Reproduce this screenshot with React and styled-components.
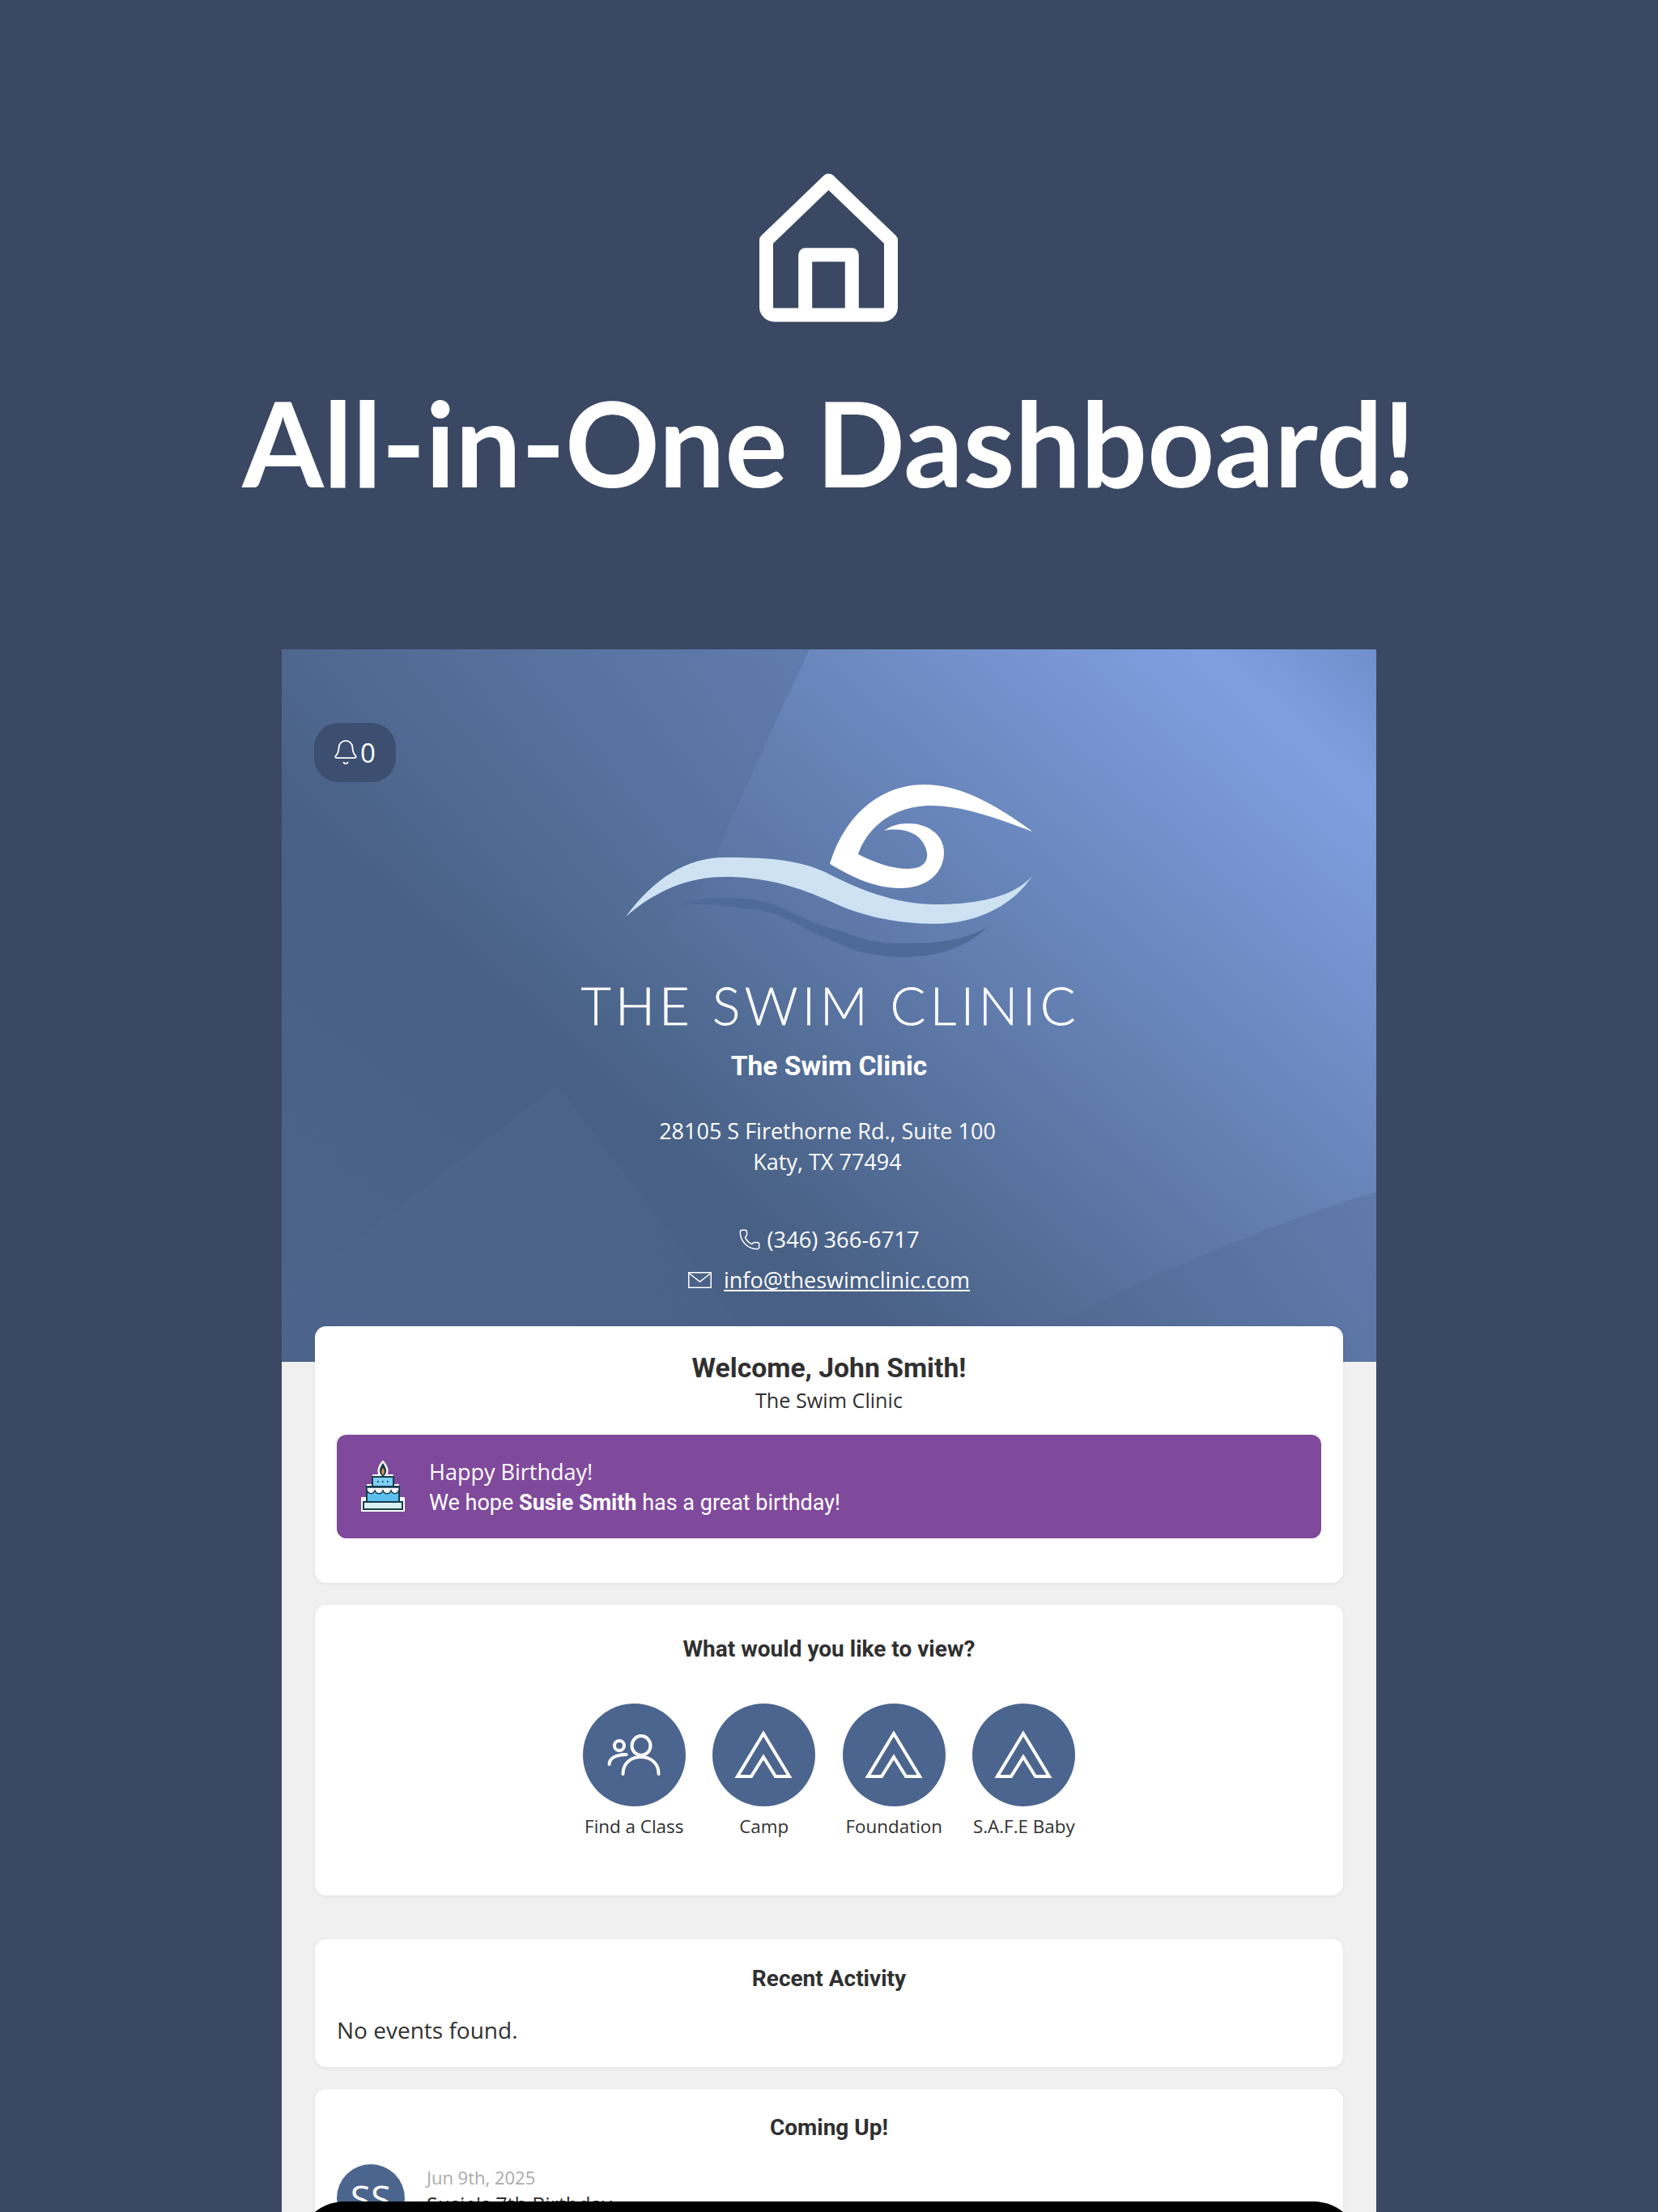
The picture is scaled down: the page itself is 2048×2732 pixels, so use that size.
import React from 'react'
import styled, { createGlobalStyle } from 'styled-components'
import { Bell, Phone } from 'lucide-react'

const GlobalStyle = createGlobalStyle`
  html, body {
    margin: 0;
    padding: 0;
    background: #3a4863;
  }
  * {
    box-sizing: border-box;
  }
`

const openSans = `"Open Sans", "Noto Sans", sans-serif`
const roboto = `Roboto, "Liberation Sans", sans-serif`

function HouseIcon() {
  return (
    <HouseSvg viewBox="0 0 171 185" fill="none" stroke="#fff" strokeWidth="17" strokeLinejoin="round">
      <path d="M85.5 10 L8.5 84 V166 a10 10 0 0 0 10 10 H152.5 a10 10 0 0 0 10-10 V84 Z" />
      <path d="M56.7 176 V101.7 H114.3 V176" />
    </HouseSvg>
  )
}

function HeroArt() {
  return (
    <ArtSvg viewBox="0 0 1352 880" preserveAspectRatio="none">
      <defs>
        <linearGradient id="topFacet" x1="0.85" y1="0" x2="0.62" y2="0.55">
          <stop offset="0" stopColor="#2f4060" stopOpacity="0.17" />
          <stop offset="1" stopColor="#2f4060" stopOpacity="0" />
        </linearGradient>
        <linearGradient id="lowFacet" x1="1" y1="0" x2="0.2" y2="1">
          <stop offset="0" stopColor="#2f4060" stopOpacity="0.16" />
          <stop offset="1" stopColor="#2f4060" stopOpacity="0.02" />
        </linearGradient>
        <linearGradient id="midFacet" x1="0.5" y1="0" x2="0.5" y2="1">
          <stop offset="0" stopColor="#8fb0d8" stopOpacity="0.03" />
          <stop offset="1" stopColor="#8fb0d8" stopOpacity="0.01" />
        </linearGradient>
      </defs>
      <path d="M0 0 H652 Q590 130 516 300 L300 520 L0 640 Z" fill="url(#topFacet)" />
      <path d="M341 538 L-8 808 V880 H600 Z" fill="url(#midFacet)" />
      <path d="M1352 670 Q1150 730 860 880 H1352 Z" fill="url(#lowFacet)" />
    </ArtSvg>
  )
}

function SwimLogo() {
  return (
    <LogoSvg viewBox="0 0 530 230">
      <path
        fill="#4e6a96"
        d="M83 157 C100 150 118 148 135 149 C165 150 185 150 215 166 C245 182 265 185 287 193 C310 202 335 206 352 205 C385 205 425 205 460 185 C440 205 405 222 356 222 C330 222 305 218 287 210 C262 200 245 192 222 180 C200 168 180 163 157 162 C135 158 110 156 83 157 Z"
      />
      <path
        fill="#cfe2f3"
        d="M13 172 C48 125 88 99 135 99 C180 99 225 100 263 119 C298 137 345 157 395 157 C440 157 490 150 515 122 C490 160 445 181 395 181 C345 181 300 170 265 153 C225 135 185 123 135 123 C90 123 50 140 13 172 Z"
      />
      <path
        fill="#fff"
        d="M515 67 C470 33 425 9 382 9 C325 9 282 50 265 107 C290 122 320 137 352 137 C385 137 406 118 406 93 C406 70 385 57 362 57 C350 57 340 60 332 66 C350 62 372 66 381 82 C390 98 385 113 362 113 C340 113 320 105 300 95 C310 65 340 35 391 35 C430 35 475 52 515 67 Z"
      />
    </LogoSvg>
  )
}

function MailIcon() {
  return (
    <MailSvg viewBox="0 0 29 20" fill="none" stroke="#fff" strokeWidth="1.5">
      <rect x="0.75" y="0.75" width="27.5" height="18.5" />
      <path d="M1 1.5 L14.5 12 L28 1.5" />
    </MailSvg>
  )
}

function CakeIcon() {
  return (
    <CakeSvg viewBox="0 0 60 64">
      <path
        d="M30 1 C24 8 23 13 26 18 H18 V30 H11 V46 H4 V62 H56 V46 H49 V30 H42 V18 H34 C37 13 36 8 30 1 Z"
        fill="#fff"
        stroke="#fff"
        strokeWidth="2"
        strokeLinejoin="round"
      />
      <path d="M30 3 C25 10 24 15 30 20 C36 15 35 10 30 3 Z" fill="#163d4d" />
      <path d="M30 9 C27.5 12 27.5 15 30 18 C32.5 15 32.5 12 30 9 Z" fill="#e28a4c" />
      <rect x="17" y="20" width="26" height="14" fill="#7ed0f5" stroke="#163d4d" strokeWidth="2" />
      <rect x="10" y="32" width="40" height="19" fill="#5cc0ee" stroke="#163d4d" strokeWidth="2" />
      <path
        d="M10 33 H50 V36 C48 42 42 42 40 37 C38 42 32 42 30 37 C28 42 22 42 20 37 C18 42 12 42 10 36 Z"
        fill="#fff"
        stroke="#163d4d"
        strokeWidth="1.5"
      />
      <rect x="6" y="51" width="48" height="9" fill="#d8f1f3" stroke="#163d4d" strokeWidth="2" />
      <path d="M23 26 h1.5 M29 26 h1.5 M35 26 h1.5" stroke="#163d4d" strokeWidth="2" />
    </CakeSvg>
  )
}

function PeopleIcon() {
  return (
    <IconSvg viewBox="0 0 127 127" fill="none" stroke="#fff" strokeWidth="4">
      <ellipse cx="72" cy="52" rx="11.5" ry="12" />
      <path d="M49.5 87 C49.5 74 59 66 71.5 66 C84 66 93.6 74 93.6 87" strokeLinecap="round" />
      <circle cx="45" cy="52" r="6" />
      <path d="M32.6 75 C32.6 68 40 63 53.6 63" strokeLinecap="round" />
    </IconSvg>
  )
}

function TentIcon() {
  return (
    <IconSvg viewBox="0 0 127 127" fill="none" stroke="#fff" strokeWidth="4">
      <path d="M63 37 L31 90 H48 L63 66 L78 90 H95 Z" />
    </IconSvg>
  )
}

const views = [
  { label: 'Find a Class', icon: <PeopleIcon /> },
  { label: 'Camp', icon: <TentIcon /> },
  { label: 'Foundation', icon: <TentIcon /> },
  { label: 'S.A.F.E Baby', icon: <TentIcon /> },
]

export default function App() {
  return (
    <Page>
      <GlobalStyle />
      <Banner>
        <HouseIcon />
        <Title>All-in-One Dashboard!</Title>
      </Banner>
      <Panel>
        <Hero>
          <HeroArt />
          <BellPill>
            <Bell size={34} strokeWidth={1.3} />
            <span>0</span>
          </BellPill>
          <SwimLogo />
          <LogoText>THE SWIM CLINIC</LogoText>
          <ClinicName>The Swim Clinic</ClinicName>
          <Address>
            28105 S Firethorne Rd., Suite 100
            <br />
            Katy, TX 77494
          </Address>
          <Contact>
            <Phone size={28} strokeWidth={1.25} />
            (346) 366-6717
          </Contact>
          <Contact $email>
            <MailIcon />
            <EmailLink href="#">info@theswimclinic.com</EmailLink>
          </Contact>
        </Hero>
        <Cards>
          <WelcomeCard>
            <Welcome>Welcome, John Smith!</Welcome>
            <WelcomeSub>The Swim Clinic</WelcomeSub>
            <BirthdayBanner>
              <CakeIcon />
              <BirthdayText>
                <BirthdayTitle>Happy Birthday!</BirthdayTitle>
                <BirthdayLine>
                  We hope <strong>Susie Smith</strong> has a great birthday!
                </BirthdayLine>
              </BirthdayText>
            </BirthdayBanner>
          </WelcomeCard>

          <ViewCard>
            <CardTitle>What would you like to view?</CardTitle>
            <ViewRow>
              {views.map((v) => (
                <ViewItem key={v.label}>
                  <ViewCircle>{v.icon}</ViewCircle>
                  <ViewLabel>{v.label}</ViewLabel>
                </ViewItem>
              ))}
            </ViewRow>
          </ViewCard>

          <ActivityCard>
            <CardTitle>Recent Activity</CardTitle>
            <Empty>No events found.</Empty>
          </ActivityCard>

          <ComingCard>
            <CardTitle>Coming Up!</CardTitle>
            <EventRow>
              <Avatar>SS</Avatar>
              <div>
                <EventDate>Jun 9th, 2025</EventDate>
                <EventName>Susie's 7th Birthday</EventName>
              </div>
            </EventRow>
          </ComingCard>
        </Cards>
        <DeviceEdge />
      </Panel>
    </Page>
  )
}

const Page = styled.div`
  width: 2048px;
  height: 2732px;
  overflow: hidden;
  background: #3a4863;
`

const Banner = styled.div`
  height: 802px;
  padding-top: 213px;
  display: flex;
  flex-direction: column;
  align-items: center;
`

const HouseSvg = styled.svg`
  width: 171px;
  height: 185px;
  flex: none;
  margin-left: -2px;
`

const Title = styled.h1`
  margin: 63px 0 0;
  font-family: Lato, ${openSans};
  font-weight: 700;
  font-size: 144.8px;
  line-height: 170px;
  color: #fff;
  white-space: nowrap;
`

const Panel = styled.div`
  position: relative;
  width: 1352px;
  height: 1930px;
  margin: 0 auto;
  background: #f0f0f0;
`

const Hero = styled.div`
  position: relative;
  height: 880px;
  padding-top: 158px;
  display: flex;
  flex-direction: column;
  align-items: center;
  color: #fff;
  background: linear-gradient(41.5deg, #4c648b 0%, #486084 33%, #7f9fe0 91%, #6f8ecb 100%);
  overflow: hidden;
  > * {
    position: relative;
  }
`

const ArtSvg = styled.svg`
  && {
    position: absolute;
  }
  inset: 0;
  width: 100%;
  height: 100%;
`

const BellPill = styled.div`
  && {
    position: absolute;
  }
  left: 40px;
  top: 91px;
  width: 101px;
  height: 73px;
  border-radius: 30px;
  background: #3d4f70;
  display: flex;
  align-items: center;
  justify-content: center;
  gap: 1px;
  padding-right: 3px;
  font-family: ${openSans};
  font-size: 33px;
  svg {
    margin-top: -2px;
  }
`

const LogoSvg = styled.svg`
  width: 530px;
  height: 230px;
  flex: none;
  margin-left: 2px;
`

const LogoText = styled.div`
  margin-top: 12px;
  margin-left: 3px;
  font-family: Lato, ${openSans};
  font-weight: 300;
  font-size: 65px;
  line-height: 78px;
  letter-spacing: 5.1px;
  white-space: nowrap;
  -webkit-text-stroke: 0.4px #fff;
`

const ClinicName = styled.div`
  margin-top: 17px;
  font-family: ${roboto};
  font-weight: 700;
  font-size: 33.6px;
  line-height: 40px;
`

const Address = styled.div`
  margin-top: 41px;
  font-family: ${openSans};
  font-size: 27px;
  line-height: 38px;
  text-align: center;
  margin-left: -4px;
`

const Contact = styled.div`
  margin-top: ${(p) => (p.$email ? '14px' : '59px')};
  display: flex;
  align-items: center;
  gap: ${(p) => (p.$email ? '15px' : '7px')};
  font-family: ${openSans};
  font-size: ${(p) => (p.$email ? '27px' : '27.3px')};
  line-height: 36px;
`

const MailSvg = styled.svg`
  width: 29px;
  height: 20px;
  flex: none;
`

const EmailLink = styled.a`
  color: #fff;
`

const Cards = styled.div`
  position: relative;
  margin-top: -44px;
  padding: 0 41px;
  display: flex;
  flex-direction: column;
`

const Card = styled.div`
  background: #fff;
  border-radius: 14px;
  box-shadow: 0 1px 5px rgba(0, 0, 0, 0.07);
  padding: 0 27px;
  color: #303030;
`

const WelcomeCard = styled(Card)`
  height: 317px;
  padding-top: 32px;
`

const Welcome = styled.div`
  font-family: ${roboto};
  font-weight: 700;
  font-size: 33.7px;
  line-height: 40px;
  text-align: center;
`

const WelcomeSub = styled.div`
  margin-top: 1px;
  font-family: ${openSans};
  font-size: 25.2px;
  line-height: 36px;
  text-align: center;
`

const BirthdayBanner = styled.div`
  margin-top: 25px;
  height: 128px;
  border-radius: 12px;
  background: #7f4a9b;
  color: #fff;
  display: flex;
  align-items: center;
  padding: 0 0 0 27px;
  gap: 27px;
`

const CakeSvg = styled.svg`
  width: 60px;
  height: 64px;
  flex: none;
`

const BirthdayText = styled.div`
  padding-top: 2px;
  display: flex;
  flex-direction: column;
`

const BirthdayTitle = styled.div`
  font-family: ${openSans};
  font-size: 27px;
  line-height: 38px;
`

const BirthdayLine = styled.div`
  font-family: ${roboto};
  font-size: 27px;
  line-height: 38px;
  strong {
    font-weight: 700;
  }
`

const CardTitle = styled.div`
  font-family: ${roboto};
  font-weight: 700;
  font-size: 28px;
  line-height: 34px;
  text-align: center;
`

const ViewCard = styled(Card)`
  margin-top: 27px;
  height: 359px;
  padding-top: 38px;
`

const ViewRow = styled.div`
  margin-top: 50px;
  display: flex;
  justify-content: center;
  gap: 33.5px;
`

const ViewItem = styled.div`
  width: 127px;
  display: flex;
  flex-direction: column;
  align-items: center;
`

const ViewCircle = styled.div`
  width: 127px;
  height: 127px;
  border-radius: 50%;
  background: #4c658f;
`

const IconSvg = styled.svg`
  display: block;
  width: 127px;
  height: 127px;
`

const ViewLabel = styled.div`
  margin-top: 8px;
  font-family: ${openSans};
  font-size: 22.4px;
  line-height: 34px;
  white-space: nowrap;
`

const ActivityCard = styled(Card)`
  margin-top: 54px;
  height: 158px;
  padding-top: 32px;
`

const Empty = styled.div`
  margin-top: 27px;
  font-family: ${openSans};
  font-size: 28px;
  line-height: 38px;
`

const ComingCard = styled(Card)`
  margin-top: 27px;
  height: 300px;
  padding-top: 31px;
`

const EventRow = styled.div`
  margin-top: 28px;
  display: flex;
  gap: 27px;
`

const Avatar = styled.div`
  width: 84px;
  height: 84px;
  flex: none;
  border-radius: 50%;
  background: #4c658f;
  color: #fff;
  font-family: ${openSans};
  font-size: 46px;
  display: flex;
  align-items: center;
  justify-content: center;
`

const EventDate = styled.div`
  font-family: ${openSans};
  font-size: 22px;
  line-height: 32px;
  color: #aaaaaa;
`

const EventName = styled.div`
  font-family: ${openSans};
  font-size: 25px;
  line-height: 34px;
`

const DeviceEdge = styled.div`
  position: absolute;
  left: 18px;
  right: 18px;
  top: 1917px;
  height: 60px;
  background: #000;
  border-radius: 60px 60px 0 0;
`
